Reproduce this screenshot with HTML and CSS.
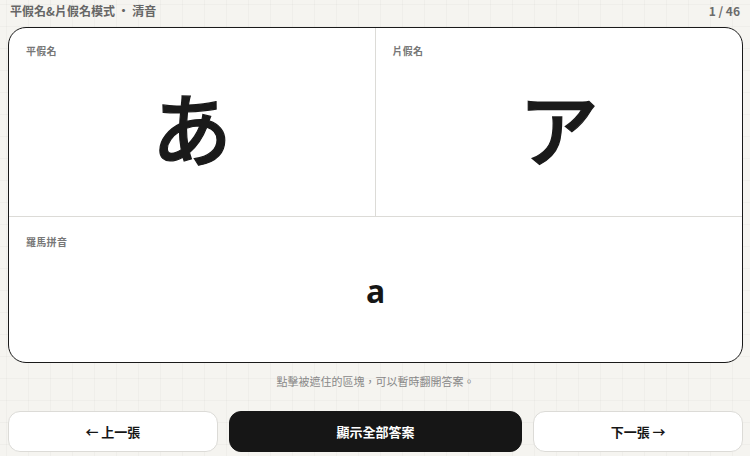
FILE: index.html
```html
<!DOCTYPE html>
<html lang="zh-Hant">
<head>
<meta charset="utf-8">
<title>平假名&amp;片假名模式</title>
<link rel="stylesheet" href="styles.css">
</head>
<body>
<div class="page">
  <header class="topbar">
    <span class="mode">平假名&amp;片假名模式 ・ 清音</span>
    <span class="count">1 / 46</span>
  </header>
  <main class="card">
    <section class="cell cell-hira">
      <div class="label">平假名</div>
      <div class="big jp">あ</div>
    </section>
    <section class="cell cell-kata">
      <div class="label">片假名</div>
      <div class="big jp">ア</div>
    </section>
    <section class="cell cell-roma">
      <div class="label">羅馬拼音</div>
      <div class="roma">a</div>
    </section>
  </main>
  <p class="hint">點擊被遮住的區塊，可以暫時翻開答案。</p>
  <nav class="actions">
    <button class="btn btn-light">← 上一張</button>
    <button class="btn btn-dark">顯示全部答案</button>
    <button class="btn btn-light">下一張 →</button>
  </nav>
</div>
</body>
</html>
```

FILE: styles.css
```css
* { box-sizing: border-box; }
html, body { margin: 0; padding: 0; }
body {
  width: 750px;
  height: 456px;
  overflow: hidden;
  font-family: "Noto Sans CJK TC", "Noto Sans", sans-serif;
  background-color: #f5f4f0;
  background-image:
    linear-gradient(to right, rgba(0,0,0,0.025) 1px, transparent 1px),
    linear-gradient(to bottom, rgba(0,0,0,0.025) 1px, transparent 1px);
  background-size: 22px 22px;
  background-position: 6px 4px;
  color: #161616;
}
.page {
  padding: 0 7px 0 8px;
}
.topbar {
  height: 20px;
  display: flex;
  align-items: center;
  justify-content: space-between;
  padding: 0 3px 0 2px;
  font-size: 12px;
  font-weight: 700;
  color: #666;
}
.count { color: #6b6b6b; }
.card {
  margin-top: 7px;
  height: 336px;
  background: #fff;
  border: 1px solid #1a1a1a;
  border-radius: 18px;
  overflow: hidden;
  display: grid;
  grid-template-columns: 1fr 1fr;
  grid-template-rows: 188px 1fr;
}
.cell {
  display: flex;
  flex-direction: column;
  padding: 16px 17px 24px;
}
.cell-hira { border-right: 1px solid #dcdbd7; }
.cell-roma {
  grid-column: 1 / 3;
  border-top: 1px solid #dcdbd7;
  padding-top: 18px;
  padding-bottom: 18px;
}
.label {
  font-size: 10px;
  font-weight: 700;
  color: #777;
  letter-spacing: 0.3px;
  line-height: 14px;
}
.big {
  flex: 1;
  display: flex;
  align-items: center;
  justify-content: center;
  font-size: 80px;
  line-height: 1;
  font-weight: 500;
  color: #1a1a1a;
  -webkit-text-stroke: 1.2px #1a1a1a;
}
.jp { font-family: "Noto Sans CJK JP", "Noto Sans CJK TC", sans-serif; }
.roma {
  flex: 1;
  display: flex;
  align-items: center;
  justify-content: center;
  font-family: "Noto Sans", sans-serif;
  font-size: 32px;
  font-weight: 700;
  color: #161616;
  padding-bottom: 12px;
}
.hint {
  margin: 10px 0 0;
  height: 16px;
  line-height: 16px;
  text-align: center;
  font-size: 11px;
  color: #888;
}
.actions {
  margin-top: 22px;
  display: grid;
  grid-template-columns: 1fr 1.4fr 1fr;
  gap: 11px;
}
.btn {
  height: 41px;
  border-radius: 12px;
  font-family: "Noto Sans CJK TC", "Noto Sans", sans-serif;
  font-size: 13px;
  font-weight: 700;
  cursor: pointer;
}
.btn-light {
  background: #fff;
  border: 1px solid #dcdbd7;
  color: #161616;
}
.btn-dark {
  background: #161616;
  border: 1px solid #161616;
  color: #fff;
}
```
